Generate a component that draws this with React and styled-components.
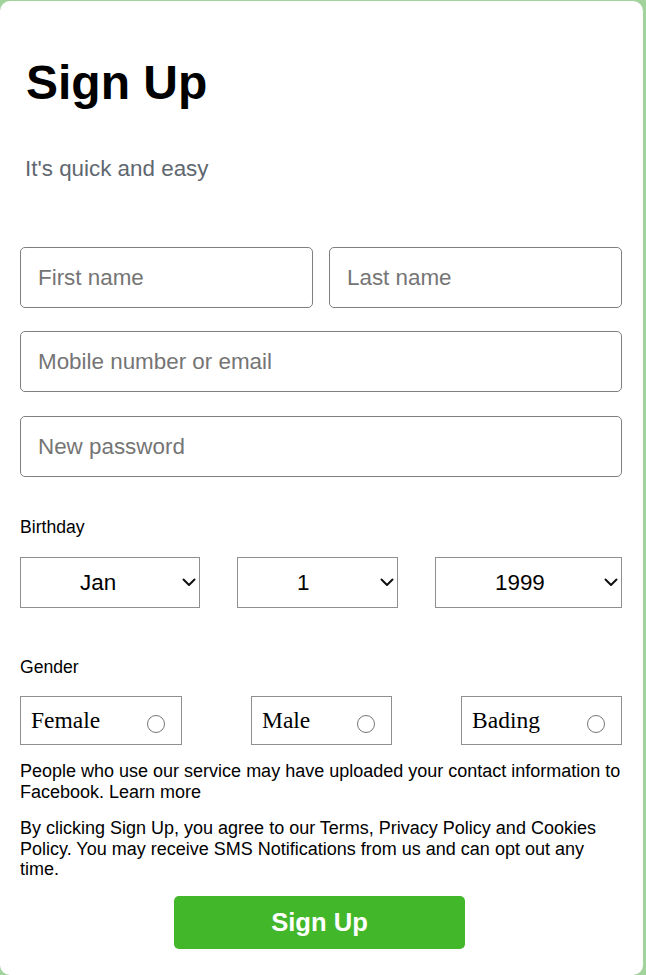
import React from "react";
import styled, { createGlobalStyle } from "styled-components";

const GlobalStyle = createGlobalStyle`
  html, body {
    margin: 0;
    padding: 0;
    background: #a3d39c;
  }
  body {
    font-family: "Liberation Sans", Arial, sans-serif;
    overflow: hidden;
  }
  * { box-sizing: border-box; }
`;

const Page = styled.div`
  padding: 1px 3px 0 0;
  height: 975px;
`;

const Card = styled.div`
  background: #ffffff;
  border-radius: 10px;
  height: 974px;
  padding: 54px 21px 0 20px;
  display: flex;
  flex-direction: column;
`;

const Title = styled.h1`
  margin: 0 0 0 6px;
  font-size: 48px;
  line-height: 55px;
  font-weight: 700;
  color: #000;
`;

const Subtitle = styled.p`
  margin: 46px 0 0 5px;
  font-size: 22.4px;
  line-height: 25px;
  color: #606770;
`;

const Form = styled.form`
  margin-top: 66px;
  display: flex;
  flex-direction: column;
`;

const NameRow = styled.div`
  display: grid;
  grid-template-columns: 1fr 1fr;
  gap: 16px;
`;

const TextInput = styled.input`
  display: block;
  width: 100%;
  height: 61px;
  margin-top: ${(p) => p.$mt || 0}px;
  padding: 0 17px;
  border: 1px solid #7f7f7f;
  border-radius: 5px;
  font-family: "Liberation Sans", Arial, sans-serif;
  font-size: 22.4px;
  color: #000;
  background: #fff;
  outline: none;
  &::placeholder {
    color: #757575;
  }
`;

const FieldLabel = styled.div`
  margin-top: ${(p) => p.$mt}px;
  font-size: 17.6px;
  line-height: 20px;
  color: #000;
`;

const SelectRow = styled.div`
  margin-top: 20px;
  display: flex;
  justify-content: space-between;
`;

const SelectWrap = styled.div`
  position: relative;
  width: ${(p) => p.$w}px;
  height: 51px;
`;

const Select = styled.select`
  appearance: none;
  -webkit-appearance: none;
  width: 100%;
  height: 100%;
  border: 1px solid #8f8f8f;
  border-radius: 0;
  background: #fff;
  font-family: "Liberation Sans", Arial, sans-serif;
  font-size: 22.4px;
  color: #000;
  text-align: left;
  padding: 0 24px 0 59px;
  outline: none;
`;

const Chevron = styled.svg`
  position: absolute;
  right: 4px;
  top: 21px;
  width: 14px;
  height: 9px;
  pointer-events: none;
`;

const GenderRow = styled.div`
  margin-top: 19px;
  display: flex;
  justify-content: space-between;
`;

const GenderBox = styled.label`
  display: flex;
  align-items: center;
  height: 49px;
  padding: 0 16px 0 10px;
  border: 1px solid #8f8f8f;
  background: #fff;
`;

const GenderText = styled.span`
  font-family: "Liberation Serif", "Times New Roman", serif;
  font-size: 23.5px;
  color: #000;
`;

const Radio = styled.input`
  appearance: none;
  -webkit-appearance: none;
  width: 18px;
  height: 18px;
  margin: 7px 0 0 47px;
  border: 1.5px solid #767676;
  border-radius: 50%;
  background: #fff;
`;

const Notice = styled.p`
  margin: 16px 0 0;
  font-size: 18px;
  line-height: 20.5px;
  color: #000;
`;

const SubmitButton = styled.button`
  align-self: center;
  margin: 16px 0 0 -3px;
  width: 291px;
  height: 53px;
  border: none;
  border-radius: 5px;
  background: #42b72a;
  color: #fff;
  font-family: "Liberation Sans", Arial, sans-serif;
  font-size: 25.6px;
  font-weight: 700;
  cursor: pointer;
`;

const months = ["Jan", "Feb", "Mar", "Apr", "May", "Jun", "Jul", "Aug", "Sep", "Oct", "Nov", "Dec"];
const days = Array.from({ length: 31 }, (_, i) => String(i + 1));
const years = Array.from({ length: 60 }, (_, i) => String(2010 - i));

const selects = [
  { w: 180, value: "Jan", options: months },
  { w: 161, value: "1", options: days },
  { w: 187, value: "1999", options: years },
];

const genders = ["Female", "Male", "Bading"];

function DateSelect({ w, value, options }) {
  return (
    <SelectWrap $w={w}>
      <Select defaultValue={value}>
        {options.map((o) => (
          <option key={o}>{o}</option>
        ))}
      </Select>
      <Chevron viewBox="0 0 14 9" fill="none">
        <path d="M1.5 1.5 L7 7 L12.5 1.5" stroke="#111" strokeWidth="2" strokeLinecap="round" strokeLinejoin="round" />
      </Chevron>
    </SelectWrap>
  );
}

export default function App() {
  return (
    <>
      <GlobalStyle />
      <Page>
        <Card>
          <Title>Sign Up</Title>
          <Subtitle>It's quick and easy</Subtitle>
          <Form onSubmit={(e) => e.preventDefault()}>
            <NameRow>
              <TextInput placeholder="First name" />
              <TextInput placeholder="Last name" />
            </NameRow>
            <TextInput $mt={23} placeholder="Mobile number or email" />
            <TextInput $mt={24} type="password" placeholder="New password" />

            <FieldLabel $mt={40}>Birthday</FieldLabel>
            <SelectRow>
              {selects.map((s) => (
                <DateSelect key={s.value} {...s} />
              ))}
            </SelectRow>

            <FieldLabel $mt={49}>Gender</FieldLabel>
            <GenderRow>
              {genders.map((g) => (
                <GenderBox key={g}>
                  <GenderText>{g}</GenderText>
                  <Radio type="radio" name="gender" />
                </GenderBox>
              ))}
            </GenderRow>

            <Notice>
              People who use our service may have uploaded your contact information to Facebook. Learn more
            </Notice>
            <Notice>
              By clicking Sign Up, you agree to our Terms, Privacy Policy and Cookies Policy. You may receive SMS
              Notifications from us and can opt out any time.
            </Notice>
            <SubmitButton type="submit">Sign Up</SubmitButton>
          </Form>
        </Card>
      </Page>
    </>
  );
}
